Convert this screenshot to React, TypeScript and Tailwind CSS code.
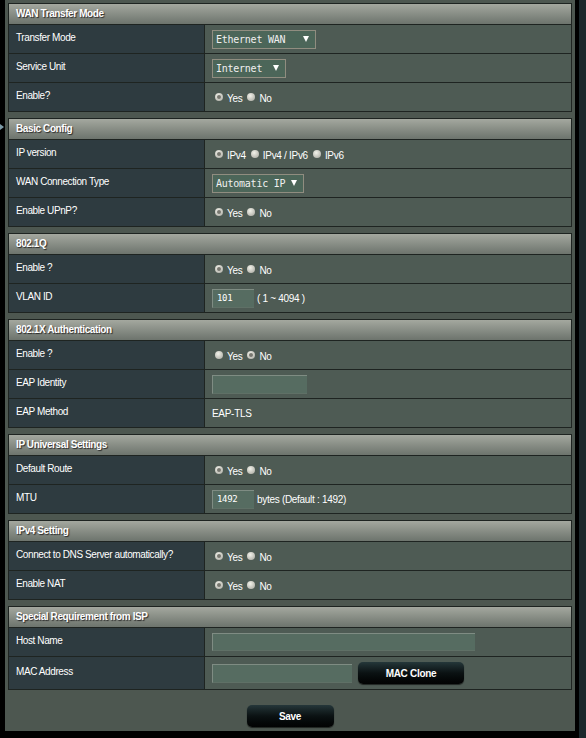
import type { ReactNode } from "react"

const SANS = "font-['Liberation_Sans',Arial,sans-serif]"
const MONO = "font-['DejaVu_Sans_Mono','Liberation_Mono',monospace]"

function Section({ title, children }: { title: string; children: ReactNode }) {
    return (
        <div className="border border-[#1e2421]">
            <div className="h-[20px] flex items-center px-[7px] pb-[1px] bg-gradient-to-b from-[#a4a89f] to-[#6d746d] text-[10px] tracking-[-0.4px] font-bold text-white [text-shadow:1px_1px_1px_#2a2a2a]">
                {title}
            </div>
            {children}
        </div>
    )
}

function Row({ label, children, tall }: { label: string; children?: ReactNode; tall?: boolean }) {
    return (
        <div className={`grid grid-cols-[196px_1fr] border-t border-[#1e2421] ${tall ? "h-[33px]" : "h-[29px]"}`}>
            <div className="bg-[#2e3b40] border-r border-[#1e2421] flex items-center px-[7px] pb-[3px] text-[10px] tracking-[-0.4px] text-white">
                {label}
            </div>
            <div className="bg-[#4e5b54] flex items-center px-[7px] text-[10px] tracking-[-0.3px] text-white">
                {children}
            </div>
        </div>
    )
}

function Radio({ label, checked }: { label: string; checked?: boolean }) {
    return (
        <span className="inline-flex items-center ml-[3px] mr-[2px]">
            <span className="w-[8px] h-[8px] rounded-full bg-[radial-gradient(circle_at_40%_35%,#f2f2ea,#a3a39b)] flex items-center justify-center">
                {checked && <span className="w-[4px] h-[4px] rounded-full bg-[#77776f]" />}
            </span>
            <span className="ml-[4px] mt-[2px]">{label}</span>
        </span>
    )
}

function Select({ value, width }: { value: string; width: string }) {
    return (
        <div className={`${width} h-[19px] border border-[#908d80] bg-[#4c6659] flex items-center justify-between pl-[3px] pr-[6px]`}>
            <span className={`${MONO} text-[10px] tracking-[-0.25px] text-[#f0f0f0]`}>{value}</span>
            <svg width="6" height="6" viewBox="0 0 6 6">
                <polygon points="0,0 6,0 3,6" fill="#ffffff" />
            </svg>
        </div>
    )
}

function Input({ value, width, h = "h-[19px]" }: { value?: string; width: string; h?: string }) {
    return (
        <div className={`${width} ${h} bg-[#566c61] border-t border-l border-[#7f8c83] border-b border-b-[#5f7066] flex items-center pl-[4px]`}>
            {value && <span className={`${MONO} text-[9px] leading-none text-white`}>{value}</span>}
        </div>
    )
}

function Button({ label, width }: { label: string; width: string }) {
    return (
        <div className={`${width} h-[22px] rounded-[5px] bg-gradient-to-b from-[#25373a] via-[#0b1213] to-[#020303] shadow-[0_1px_1px_rgba(0,0,0,0.6)] flex items-center justify-center text-[10px] tracking-[-0.3px] font-bold text-white`}>
            {label}
        </div>
    )
}

export default function App() {
    return (
        <div className={`relative w-[586px] h-[738px] bg-black flex ${SANS}`}>
            <div className="absolute left-0 top-[124px] w-0 h-0 border-y-[3px] border-y-transparent border-l-[4px] border-l-[#7d9ba8]" />
            <div className="w-[5px] shrink-0" />
            <div className="w-[570px] h-[731px] bg-[#4d5750] pt-[3px] px-[3px] flex flex-col gap-[6px]">
                <Section title="WAN Transfer Mode">
                    <Row label="Transfer Mode"><Select value="Ethernet WAN" width="w-[104px]" /></Row>
                    <Row label="Service Unit"><Select value="Internet" width="w-[74px]" /></Row>
                    <Row label="Enable?"><Radio label="Yes" checked /><Radio label="No" /></Row>
                </Section>

                <Section title="Basic Config">
                    <Row label="IP version">
                        <Radio label="IPv4" checked /><Radio label="IPv4 / IPv6" /><Radio label="IPv6" />
                    </Row>
                    <Row label="WAN Connection Type"><Select value="Automatic IP" width="w-[92px]" /></Row>
                    <Row label="Enable UPnP?"><Radio label="Yes" checked /><Radio label="No" /></Row>
                </Section>

                <Section title="802.1Q">
                    <Row label="Enable ?"><Radio label="Yes" checked /><Radio label="No" /></Row>
                    <Row label="VLAN ID">
                        <Input value="101" width="w-[42px]" />
                        <span className="ml-[3px]">( 1 ~ 4094 )</span>
                    </Row>
                </Section>

                <Section title="802.1X Authentication">
                    <Row label="Enable ?"><Radio label="Yes" /><Radio label="No" checked /></Row>
                    <Row label="EAP Identity"><Input width="w-[95px]" /></Row>
                    <Row label="EAP Method"><span>EAP-TLS</span></Row>
                </Section>

                <Section title="IP Universal Settings">
                    <Row label="Default Route"><Radio label="Yes" checked /><Radio label="No" /></Row>
                    <Row label="MTU">
                        <Input value="1492" width="w-[42px]" />
                        <span className="ml-[3px]">bytes (Default : 1492)</span>
                    </Row>
                </Section>

                <Section title="IPv4 Setting">
                    <Row label="Connect to DNS Server automatically?"><Radio label="Yes" checked /><Radio label="No" /></Row>
                    <Row label="Enable NAT"><Radio label="Yes" checked /><Radio label="No" /></Row>
                </Section>

                <Section title="Special Requirement from ISP">
                    <Row label="Host Name"><Input width="w-[263px]" h="h-[18px]" /></Row>
                    <Row label="MAC Address" tall>
                        <Input width="w-[140px]" />
                        <div className="ml-[6px]"><Button label="MAC Clone" width="w-[106px]" /></div>
                    </Row>
                </Section>

                <div className="flex justify-center mt-[9px]">
                    <Button label="Save" width="w-[87px]" />
                </div>
            </div>
            <div className="w-[4px] shrink-0" />
            <div className="flex-1 h-full bg-[#1b282c]" />
        </div>
    )
}
